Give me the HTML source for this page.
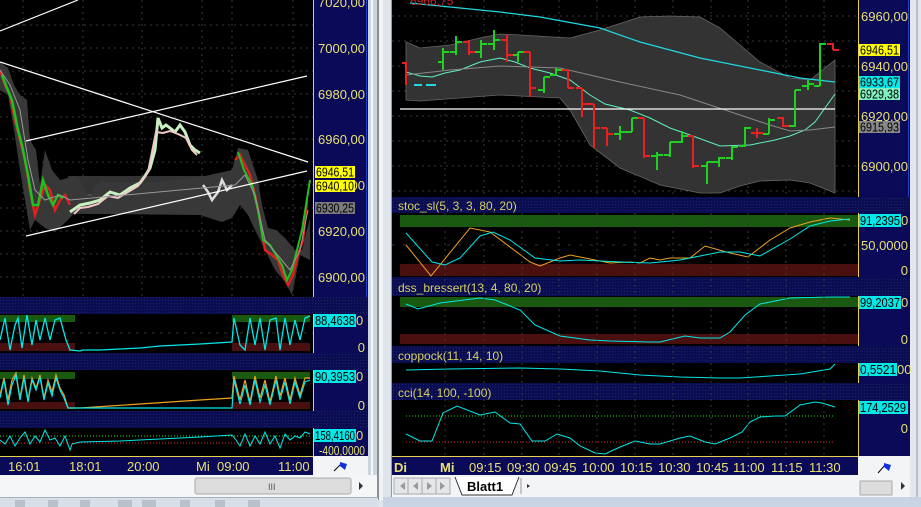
<!DOCTYPE html>
<html><head><meta charset="utf-8"><style>
html,body{margin:0;padding:0;background:#dde4ec;width:921px;height:507px;overflow:hidden}
svg{display:block;font-family:"Liberation Sans",sans-serif}
.ax{fill:#e8e070;font-size:13px}
.lbl{fill:#d8d060;font-size:12px}
</style></head><body>
<svg width="921" height="507" viewBox="0 0 921 507" xmlns="http://www.w3.org/2000/svg">
<defs>
<pattern id="dots" width="3" height="3" patternUnits="userSpaceOnUse"><rect width="3" height="3" fill="#0a0e50"/><rect width="1" height="1" fill="#1a2070"/></pattern>
</defs>
<rect x="0" y="0" width="921" height="507" fill="#dfe6ee"/>
<rect x="0" y="475" width="378" height="22" fill="#f4f6f8"/>
<rect x="377" y="0" width="2" height="500" fill="#8a8f98"/>
<rect x="379" y="0" width="4" height="500" fill="#f0f2f5"/>
<rect x="383" y="0" width="8" height="500" fill="#dfe4ea"/>
<rect x="391" y="0" width="1" height="497" fill="#9098a4"/>
<rect x="368" y="0" width="9" height="475" fill="#ccd4de"/>
<rect x="371" y="0" width="2" height="475" fill="#f8f8f8"/>
<rect x="910" y="0" width="11" height="497" fill="#e4e8ee"/>
<rect x="916" y="0" width="2" height="497" fill="#b8c0cc"/>
<rect x="0" y="497" width="378" height="10" fill="#d8dfe8"/>
<rect x="0" y="497" width="378" height="1" fill="#a8b0bc"/>
<rect x="383" y="497" width="538" height="10" fill="#c8d4e4"/>
<g fill="#b8c0cc"><rect x="15" y="500" width="10" height="7"/><rect x="48" y="500" width="10" height="7"/><rect x="80" y="500" width="10" height="7"/><rect x="118" y="500" width="14" height="7"/><rect x="142" y="500" width="14" height="7"/><rect x="180" y="500" width="10" height="7"/><rect x="215" y="500" width="10" height="7"/><rect x="248" y="500" width="12" height="7"/></g>

<!-- LEFT WINDOW -->
<rect x="0" y="0" width="313" height="297" fill="#000"/>
<g stroke="#3a3a3a" stroke-dasharray="2,4" stroke-width="1">
<line x1="23" y1="0" x2="23" y2="297"/><line x1="83" y1="0" x2="83" y2="297"/><line x1="142" y1="0" x2="142" y2="297"/><line x1="202" y1="0" x2="202" y2="297"/><line x1="232" y1="0" x2="232" y2="297"/><line x1="293" y1="0" x2="293" y2="297"/>
<line x1="0" y1="25" x2="313" y2="25"/><line x1="0" y1="48" x2="313" y2="48"/><line x1="0" y1="71" x2="313" y2="71"/><line x1="0" y1="94" x2="313" y2="94"/><line x1="0" y1="117" x2="313" y2="117"/><line x1="0" y1="139" x2="313" y2="139"/><line x1="0" y1="162" x2="313" y2="162"/><line x1="0" y1="185" x2="313" y2="185"/><line x1="0" y1="208" x2="313" y2="208"/><line x1="0" y1="231" x2="313" y2="231"/><line x1="0" y1="254" x2="313" y2="254"/><line x1="0" y1="277" x2="313" y2="277"/>
</g>
<rect x="68" y="176" width="164" height="38" fill="#333"/>
<line x1="68" y1="195" x2="232" y2="195" stroke="#666" stroke-width="1"/>
<polygon fill="#383838" points="0,62 8,68 14,85 20,95 27,100 30,140 36,150 40,185 45,150 52,170 60,180 68,178 75,176 80,180 85,190 90,200 95,185 100,182 160,182 205,176 232,170 238,148 248,150 258,180 262,205 268,228 276,230 285,238 295,250 302,250 310,218 310,260 300,255 292,295 285,282 275,270 265,250 255,230 248,215 240,205 232,218 222,222 200,215 100,214 75,212 68,220 55,232 45,228 35,220 30,230 25,200 20,170 14,130 8,95 0,90"/>
<polyline fill="none" stroke="#c8f0c0" stroke-width="3" points="70,212 80,205 90,203 100,200 110,192 120,195 130,188 140,183 145,176 150,168 155,150 158,118 162,128 166,125 170,128 175,132 180,125 185,132 190,145 195,150 200,153"/>
<polyline fill="none" stroke="#f0c8c8" stroke-width="2" points="74,214 80,208 88,207 98,204 108,196 118,198 128,192 138,186 148,172 156,132 163,133 170,131 178,134 186,138 192,150 197,155"/>
<polyline fill="none" stroke="#ddd" stroke-width="2.5" points="203,185 208,192 212,200 218,192 222,180 227,190 232,185"/>
<polyline fill="none" stroke="#e02020" stroke-width="2.5" points="0,70 5,85 10,95 15,120 20,140 25,160 30,190 35,215 40,200 45,185 50,190 55,210 60,200 65,195 70,205"/>
<polyline fill="none" stroke="#20c020" stroke-width="2.5" points="2,75 7,88 12,100 18,130 22,145 28,175 33,205 38,205 43,180 48,195 53,205 58,195 63,198"/>
<polyline fill="none" stroke="#e02020" stroke-width="2.5" points="235,160 240,155 245,165 250,175 255,195 260,220 265,250 272,255 278,260 283,275 288,285 293,275 298,255 303,240 307,200"/>
<polyline fill="none" stroke="#20c020" stroke-width="2" points="238,152 244,170 252,185 258,210 263,240 270,245 276,255 282,265 287,280 292,270 297,250 302,230 306,205 310,180"/>
<polyline fill="none" stroke="#999" stroke-width="1" points="0,70 10,85 20,110 28,160 35,190 45,200 60,195 70,200 235,185 245,175 255,195 265,240 280,258 290,270 300,250 308,210"/>
<g stroke="#fff" stroke-width="1.2"><line x1="0" y1="31" x2="78" y2="0"/><line x1="0" y1="62" x2="308" y2="162"/><line x1="26" y1="141" x2="307" y2="76"/><line x1="26" y1="236" x2="307" y2="171"/></g>
<rect x="313" y="0" width="55" height="297" fill="#0a0a58"/>
<rect x="313" y="0" width="1" height="297" fill="#e8d050"/>
<rect x="366" y="0" width="1" height="297" fill="#2040d0"/>
<g class="ax" text-anchor="end"><text x="365" y="7">7020,00</text><text x="365" y="53">7000,00</text><text x="365" y="99">6980,00</text><text x="365" y="144">6960,00</text><text x="365" y="190">6940,00</text><text x="365" y="236">6920,00</text><text x="365" y="282">6900,00</text></g>
<rect x="315" y="166" width="40" height="12" fill="#ffff00"/><text x="316" y="176.5" font-size="12.5" fill="#000" textLength="38" lengthAdjust="spacingAndGlyphs">6946,51</text>
<rect x="315" y="180" width="40" height="12" fill="#ffff00"/><text x="316" y="190.5" font-size="12.5" fill="#000" textLength="38" lengthAdjust="spacingAndGlyphs">6940,10</text>
<rect x="315" y="202" width="40" height="12" fill="#7a7a7a"/><text x="316" y="212.5" font-size="12.5" fill="#000" textLength="38" lengthAdjust="spacingAndGlyphs">6930,25</text>

<rect x="0" y="297" width="368" height="17" fill="url(#dots)"/>
<rect x="0" y="353" width="368" height="17" fill="url(#dots)"/>
<rect x="0" y="411" width="368" height="17" fill="url(#dots)"/>
<rect x="0" y="314" width="313" height="39" fill="#000"/>
<rect x="0" y="315" width="75" height="7" fill="#1a5a10"/><rect x="232" y="315" width="78" height="7" fill="#1a5a10"/>
<rect x="0" y="343" width="75" height="8" fill="#4a1010"/><rect x="232" y="343" width="78" height="8" fill="#4a1010"/>
<line x1="0" y1="333" x2="313" y2="333" stroke="#333" stroke-dasharray="3,5"/>
<polyline fill="none" stroke="#00e8e8" stroke-width="1.3" points="0,340 5,318 10,350 15,325 18,318 22,348 27,315 32,345 36,320 40,340 45,318 50,340 55,320 60,318 66,340 70,350 80,351 83,350 100,350 120,349 140,348 160,346 180,345 200,344 232,342 234,318 240,345 245,350 250,318 255,345 260,318 265,350 270,320 276,318 280,350 285,318 290,345 295,320 300,340 305,318 310,316"/>
<rect x="0" y="370" width="313" height="41" fill="#000"/>
<rect x="0" y="372" width="75" height="7" fill="#1a5a10"/><rect x="232" y="372" width="78" height="7" fill="#1a5a10"/>
<rect x="0" y="402" width="75" height="7" fill="#4a1010"/><rect x="232" y="402" width="78" height="7" fill="#4a1010"/>
<polyline fill="none" stroke="#f0a020" stroke-width="1.2" points="0,395 4,378 8,400 12,380 16,373 20,398 24,375 28,400 32,378 36,388 40,375 44,398 48,380 52,392 56,375 60,388 64,395 68,408 80,408 110,406 140,404 170,402 200,400 232,398 234,376 240,400 245,380 250,402 255,376 260,398 265,380 270,402 276,376 280,396 285,378 290,400 295,378 300,395 305,378 310,378"/>
<polyline fill="none" stroke="#00e8e8" stroke-width="1.2" points="0,398 4,380 8,405 12,385 16,375 20,400 24,378 28,402 32,380 36,390 40,377 44,400 48,383 52,396 56,378 60,390 64,398 68,408 232,408 234,380 240,404 245,385 250,405 255,380 260,402 265,385 270,405 276,380 280,400 285,382 290,404 295,382 300,398 305,382 310,380"/>
<rect x="0" y="428" width="313" height="29" fill="#000"/>
<line x1="0" y1="436" x2="310" y2="436" stroke="#20e020" stroke-dasharray="1,2"/>
<line x1="0" y1="443" x2="310" y2="443" stroke="#e02020" stroke-dasharray="1,2"/>
<polyline fill="none" stroke="#00e8e8" stroke-width="1" points="0,440 5,444 10,436 15,446 20,438 25,432 30,444 35,436 40,442 45,430 50,440 55,438 60,446 65,436 70,450 72,444 80,442 120,441 160,439 200,437 232,435 236,440 240,446 245,434 250,446 255,436 260,444 265,432 270,444 275,436 280,448 285,434 290,440 295,436 300,438 305,432 310,434"/>
<rect x="313" y="314" width="55" height="39" fill="#0a0a58"/><rect x="313" y="314" width="1" height="39" fill="#e8d050"/>
<rect x="313" y="370" width="55" height="41" fill="#0a0a58"/><rect x="313" y="370" width="1" height="41" fill="#e8d050"/>
<rect x="313" y="428" width="55" height="29" fill="#0a0a58"/><rect x="313" y="428" width="1" height="29" fill="#e8d050"/>
<rect x="314" y="314" width="42" height="13" fill="#00e8e8"/><text x="315" y="325" font-size="12.5" fill="#000" textLength="40" lengthAdjust="spacingAndGlyphs">88,4638</text><text x="356" y="325" class="ax">0</text>
<text x="365" y="352" class="ax" text-anchor="end">0</text>
<rect x="314" y="370" width="42" height="13" fill="#00e8e8"/><text x="315" y="381" font-size="12.5" fill="#000" textLength="40" lengthAdjust="spacingAndGlyphs">90,3953</text><text x="356" y="381" class="ax">0</text>
<text x="365" y="410" class="ax" text-anchor="end">0</text>
<rect x="314" y="429" width="42" height="13" fill="#00e8e8"/><text x="315" y="440" font-size="12.5" fill="#000" textLength="40" lengthAdjust="spacingAndGlyphs">158,4160</text><text x="356" y="440" class="ax">0</text>
<text x="365" y="455" class="ax" text-anchor="end" textLength="46" lengthAdjust="spacingAndGlyphs">-400,0000</text>
<rect x="0" y="456" width="313" height="19" fill="#0a0a58"/><rect x="0" y="456" width="313" height="1" fill="#e8d050"/>
<g class="ax"><text x="8" y="471">16:01</text><text x="69" y="471">18:01</text><text x="127" y="471">20:00</text><text x="196" y="471">Mi</text><text x="217" y="471">09:00</text><text x="278" y="471">11:00</text></g>
<rect x="313" y="456" width="55" height="19" fill="#f2f4f6"/>
<line x1="334" y1="471" x2="342" y2="463" stroke="#000"/><path d="M340,462 L347,464 L345,470 L340,466 Z" fill="#1030e0"/>
<rect x="195" y="478" width="156" height="16" rx="2" fill="#dcdcdc" stroke="#aaa"/>
<text x="268" y="490" font-size="9" fill="#555">III</text>
<path d="M359,482 L363,486 L359,490 Z" fill="#333"/>

<!-- RIGHT WINDOW -->
<rect x="392" y="0" width="466" height="197" fill="#000"/>
<g stroke="#3a3a3a" stroke-dasharray="2,4">
<line x1="445" y1="0" x2="445" y2="197"/><line x1="484" y1="0" x2="484" y2="197"/><line x1="522" y1="0" x2="522" y2="197"/><line x1="559" y1="0" x2="559" y2="197"/><line x1="597" y1="0" x2="597" y2="197"/><line x1="635" y1="0" x2="635" y2="197"/><line x1="673" y1="0" x2="673" y2="197"/><line x1="711" y1="0" x2="711" y2="197"/><line x1="748" y1="0" x2="748" y2="197"/><line x1="786" y1="0" x2="786" y2="197"/><line x1="824" y1="0" x2="824" y2="197"/>
<line x1="392" y1="16" x2="858" y2="16"/><line x1="392" y1="41" x2="858" y2="41"/><line x1="392" y1="66" x2="858" y2="66"/><line x1="392" y1="91" x2="858" y2="91"/><line x1="392" y1="116" x2="858" y2="116"/><line x1="392" y1="141" x2="858" y2="141"/><line x1="392" y1="166" x2="858" y2="166"/><line x1="392" y1="191" x2="858" y2="191"/>
</g>
<polygon fill="#333" stroke="#666" stroke-width="0.8" points="406,42 420,48 450,45 480,38 500,34 520,35 570,38 600,30 640,17 670,16 700,17 720,28 740,45 760,62 790,78 810,80 835,60 835,193 810,183 790,180 760,181 740,186 720,193 700,193 660,185 620,168 590,145 570,110 560,98 540,97 500,95 460,98 420,101 406,100"/>
<polyline fill="none" stroke="#20d8e0" stroke-width="1.2" points="410,3 450,7 500,12 540,17 600,28 640,42 700,58 770,72 800,78 835,82"/>
<polyline fill="none" stroke="#60f0c0" stroke-width="1" points="406,72 420,76 432,77 445,73 460,70 480,62 500,58 515,62 530,68 550,73 570,80 590,95 605,104 630,110 650,118 670,128 690,135 720,146 750,145 775,140 790,136 805,130 815,122 825,108 835,94"/>
<polyline fill="none" stroke="#888" stroke-width="1" points="406,75 450,70 500,66 560,68 620,82 680,95 740,115 770,125 790,131 810,130 835,127"/>
<line x1="400" y1="109" x2="835" y2="109" stroke="#fff" stroke-width="1.2"/>
<g stroke="#20d8e0" stroke-width="2"><line x1="414" y1="85" x2="422" y2="85"/><line x1="426" y1="85" x2="436" y2="85"/></g>
<g fill="none" stroke-width="2">
<path stroke="#e82020" d="M402,63 H406 V85"/>
<path stroke="#20d020" d="M443,48 V70 M438,62 H443 M443,52 H449"/>
<path stroke="#20d020" d="M456,36 V55 M450,52 H456 M456,42 H462"/>
<path stroke="#e82020" d="M469,40 V55 M463,42 H469 M469,52 H475"/>
<path stroke="#20d020" d="M481,40 V58 M475,52 H481 M481,44 H487"/>
<path stroke="#20d020" d="M494,30 V50 M488,44 H494 M494,40 H500"/>
<path stroke="#e82020" d="M507,35 V62 M501,40 H507 M507,55 H513"/>
<path stroke="#20d020" d="M518,52 V62 M513,55 H518 M518,52 H524"/>
<path stroke="#e82020" d="M530,52 V97 M524,52 H530 M530,88 H536"/>
<path stroke="#20d020" d="M544,77 V93 M538,90 H544 M544,77 H550"/>
<path stroke="#20d020" d="M556,68 V75 M550,75 H556 M556,70 H562"/>
<path stroke="#e82020" d="M568,70 V88 M562,70 H568 M568,88 H574"/>
<path stroke="#e82020" d="M582,88 V117 M576,88 H582 M582,104 H588"/>
<path stroke="#e82020" d="M594,104 V148 M588,104 H594 M594,128 H600"/>
<path stroke="#e82020" d="M607,128 V146 M601,128 H607 M607,134 H613"/>
<path stroke="#20d020" d="M620,126 V140 M614,134 H620 M620,132 H626"/>
<path stroke="#20d020" d="M632,118 V132 M626,132 H632 M632,118 H638"/>
<path stroke="#e82020" d="M644,118 V158 M638,118 H644 M644,156 H650"/>
<path stroke="#20d020" d="M657,152 V170 M651,156 H657 M657,155 H663"/>
<path stroke="#20d020" d="M670,142 V157 M664,155 H670 M670,142 H676"/>
<path stroke="#20d020" d="M682,131 V143 M676,142 H682 M682,136 H688"/>
<path stroke="#e82020" d="M693,135 V168 M688,136 H693 M693,166 H699"/>
<path stroke="#20d020" d="M707,162 V184 M701,166 H707 M707,162 H713"/>
<path stroke="#20d020" d="M719,157 V167 M713,162 H719 M719,158 H725"/>
<path stroke="#20d020" d="M732,146 V160 M726,158 H732 M732,147 H738"/>
<path stroke="#20d020" d="M745,127 V147 M739,146 H745 M745,128 H751"/>
<path stroke="#e82020" d="M757,128 V138 M751,133 H763"/>
<path stroke="#20d020" d="M769,118 V134 M763,134 H769 M769,120 H775"/>
<path stroke="#e82020" d="M783,117 V127 M777,118 H783 M783,126 H789"/>
<path stroke="#20d020" d="M795,90 V127 M789,126 H795 M795,90 H801"/>
<path stroke="#20d020" d="M808,80 V90 M802,86 H808 M808,84 H814"/>
<path stroke="#20d020" d="M820,43 V86 M814,86 H820 M820,44 H826"/>
<path stroke="#e82020" d="M833,43 V50 M827,44 H833 M833,50 H839"/>
</g>
<text x="410" y="5" fill="#d02020" font-size="12">6966,75</text>
<rect x="858" y="0" width="52" height="197" fill="#0a0a58"/><rect x="858" y="0" width="1" height="197" fill="#e8d050"/><rect x="908" y="0" width="1" height="197" fill="#2040d0"/>
<g class="ax" text-anchor="end"><text x="908" y="21">6960,00</text><text x="908" y="71">6940,00</text><text x="908" y="121">6920,00</text><text x="908" y="171">6900,00</text></g>
<rect x="859" y="44" width="41" height="12" fill="#ffff00"/><text x="860" y="54.5" font-size="12.5" fill="#000" textLength="39" lengthAdjust="spacingAndGlyphs">6946,51</text>
<rect x="859" y="76" width="41" height="12" fill="#00e8e8"/><text x="860" y="86.5" font-size="12.5" fill="#000" textLength="39" lengthAdjust="spacingAndGlyphs">6933,67</text>
<rect x="859" y="88" width="41" height="12" fill="#80f0c0"/><text x="860" y="98.5" font-size="12.5" fill="#000" textLength="39" lengthAdjust="spacingAndGlyphs">6929,38</text>
<rect x="859" y="121" width="41" height="12" fill="#888"/><text x="860" y="131.5" font-size="12.5" fill="#000" textLength="39" lengthAdjust="spacingAndGlyphs">6915,93</text>

<rect x="392" y="197" width="518" height="16" fill="url(#dots)"/><text x="398" y="210" class="lbl">stoc_sl(5, 3, 3, 80, 20)</text>
<rect x="392" y="277" width="518" height="19" fill="url(#dots)"/><text x="398" y="292" class="lbl">dss_bressert(13, 4, 80, 20)</text>
<rect x="392" y="346" width="518" height="17" fill="url(#dots)"/><text x="398" y="360" class="lbl">coppock(11, 14, 10)</text>
<rect x="392" y="383" width="518" height="17" fill="url(#dots)"/><text x="398" y="397" class="lbl">cci(14, 100, -100)</text>

<rect x="392" y="213" width="466" height="64" fill="#000"/>
<rect x="400" y="215" width="458" height="12" fill="#1a5a10"/>
<rect x="400" y="264" width="458" height="12" fill="#4a1010"/>
<line x1="392" y1="245" x2="858" y2="245" stroke="#333" stroke-dasharray="3,8"/>
<polyline fill="none" stroke="#f0a020" stroke-width="1" points="406,245 431,276 470,228 490,232 530,262 540,266 560,258 570,255 610,263 630,262 640,263 650,258 660,260 670,258 690,258 705,246 730,253 748,257 770,240 790,228 810,222 830,218 840,219 850,220"/>
<polyline fill="none" stroke="#00e8e8" stroke-width="1" points="406,233 432,262 445,265 460,258 480,236 493,232 510,240 535,258 560,261 580,260 620,262 650,263 680,260 705,255 720,252 740,252 760,256 790,239 810,226 830,221 850,219"/>
<rect x="392" y="296" width="466" height="50" fill="#000"/>
<rect x="400" y="297" width="458" height="10" fill="#1a5a10"/>
<rect x="400" y="334" width="458" height="10" fill="#4a1010"/>
<polyline fill="none" stroke="#00e8e8" stroke-width="1" points="406,304 418,309 440,303 480,298 495,300 520,310 535,325 560,336 590,340 610,341 650,342 660,342 685,336 700,338 720,338 730,332 745,315 760,304 790,298 830,297 850,297"/>
<rect x="392" y="363" width="466" height="20" fill="#000"/>
<polyline fill="none" stroke="#00e8e8" stroke-width="1" points="406,370 450,369 520,368 560,369 600,371 640,375 680,377 720,378 740,378 770,376 800,374 830,369 835,364"/>
<rect x="392" y="400" width="466" height="56" fill="#000"/>
<line x1="406" y1="416" x2="835" y2="416" stroke="#20e020" stroke-dasharray="1,2"/>
<line x1="406" y1="442" x2="835" y2="442" stroke="#e02020" stroke-dasharray="1,2"/>
<polyline fill="none" stroke="#00e8e8" stroke-width="1" points="406,434 420,441 432,441 443,413 457,406 480,415 495,412 510,423 520,424 532,441 545,441 557,434 570,438 580,446 595,453 605,454 620,447 635,441 650,444 660,444 680,438 690,436 705,442 715,444 730,438 742,432 750,422 760,417 775,416 785,416 800,405 815,402 822,403 835,407"/>
<g stroke="#3a3a3a" stroke-dasharray="2,4">
<line x1="445" y1="213" x2="445" y2="456"/><line x1="484" y1="213" x2="484" y2="456"/><line x1="522" y1="213" x2="522" y2="456"/><line x1="559" y1="213" x2="559" y2="456"/><line x1="597" y1="213" x2="597" y2="456"/><line x1="635" y1="213" x2="635" y2="456"/><line x1="673" y1="213" x2="673" y2="456"/><line x1="711" y1="213" x2="711" y2="456"/><line x1="748" y1="213" x2="748" y2="456"/><line x1="786" y1="213" x2="786" y2="456"/><line x1="824" y1="213" x2="824" y2="456"/>
</g>
<rect x="858" y="213" width="52" height="64" fill="#0a0a58"/><rect x="858" y="213" width="1" height="64" fill="#e8d050"/>
<rect x="858" y="296" width="52" height="50" fill="#0a0a58"/><rect x="858" y="296" width="1" height="50" fill="#e8d050"/>
<rect x="858" y="363" width="52" height="20" fill="#0a0a58"/><rect x="858" y="363" width="1" height="20" fill="#e8d050"/>
<rect x="858" y="400" width="52" height="56" fill="#0a0a58"/><rect x="858" y="400" width="1" height="56" fill="#e8d050"/>
<rect x="859" y="214" width="42" height="13" fill="#00e8e8"/><text x="860" y="225" font-size="12.5" fill="#000" textLength="40" lengthAdjust="spacingAndGlyphs">91,2395</text><text x="901" y="225" class="ax">0</text>
<text x="908" y="250" class="ax" text-anchor="end">50,0000</text><text x="908" y="275" class="ax" text-anchor="end">0</text>
<rect x="859" y="296" width="42" height="13" fill="#00e8e8"/><text x="860" y="307" font-size="12.5" fill="#000" textLength="40" lengthAdjust="spacingAndGlyphs">99,2037</text><text x="901" y="307" class="ax">0</text>
<text x="908" y="344" class="ax" text-anchor="end">0</text>
<rect x="859" y="363" width="38" height="13" fill="#00e8e8"/><text x="860" y="374" font-size="12.5" fill="#000" textLength="36" lengthAdjust="spacingAndGlyphs">0,5521</text><text x="897" y="374" class="ax">00</text>
<rect x="859" y="401" width="49" height="13" fill="#00e8e8"/><text x="860" y="412" font-size="12.5" fill="#000" textLength="46" lengthAdjust="spacingAndGlyphs">174,2529</text>
<text x="908" y="433" class="ax" text-anchor="end">0</text>
<rect x="392" y="456" width="466" height="19" fill="#0a0a58"/><rect x="392" y="456" width="466" height="1" fill="#e8d050"/>
<g class="ax"><text x="394" y="472" font-weight="bold">Di</text><text x="440" y="472" font-weight="bold">Mi</text><text x="469" y="472">09:15</text><text x="507" y="472">09:30</text><text x="544" y="472">09:45</text><text x="582" y="472">10:00</text><text x="620" y="472">10:15</text><text x="658" y="472">10:30</text><text x="696" y="472">10:45</text><text x="733" y="472">11:00</text><text x="771" y="472">11:15</text><text x="809" y="472">11:30</text></g>
<rect x="858" y="456" width="52" height="19" fill="#f2f4f6"/>
<line x1="878" y1="473" x2="886" y2="464" stroke="#000"/><path d="M884,463 L891,465 L889,471 L884,467 Z" fill="#1030e0"/>
<rect x="392" y="475" width="518" height="22" fill="#f2f4f6"/>
<g fill="#e4e6ea" stroke="#aaa"><rect x="394" y="478" width="14" height="16"/><rect x="408" y="478" width="14" height="16"/><rect x="422" y="478" width="14" height="16"/><rect x="436" y="478" width="14" height="16"/></g>
<g fill="#999"><path d="M400,486 L405,482 V490 Z"/><path d="M413,486 L418,482 V490 Z"/><path d="M432,486 L427,482 V490 Z"/><path d="M445,486 L440,482 V490 Z"/></g>
<path d="M455,477 L462,495 H512 L519,477" fill="#fff" stroke="#333"/>
<text x="467" y="491" font-size="13" font-weight="bold" fill="#000">Blatt1</text>
<line x1="521" y1="478" x2="521" y2="494" stroke="#999"/>
<path d="M530,486 L527,484 V488 Z" fill="#333"/>
<rect x="860" y="481" width="32" height="14" fill="#dcdcdc" stroke="#aaa"/>
<path d="M901,482 L905,486 L901,490 Z" fill="#333"/>
</svg>
</body></html>
